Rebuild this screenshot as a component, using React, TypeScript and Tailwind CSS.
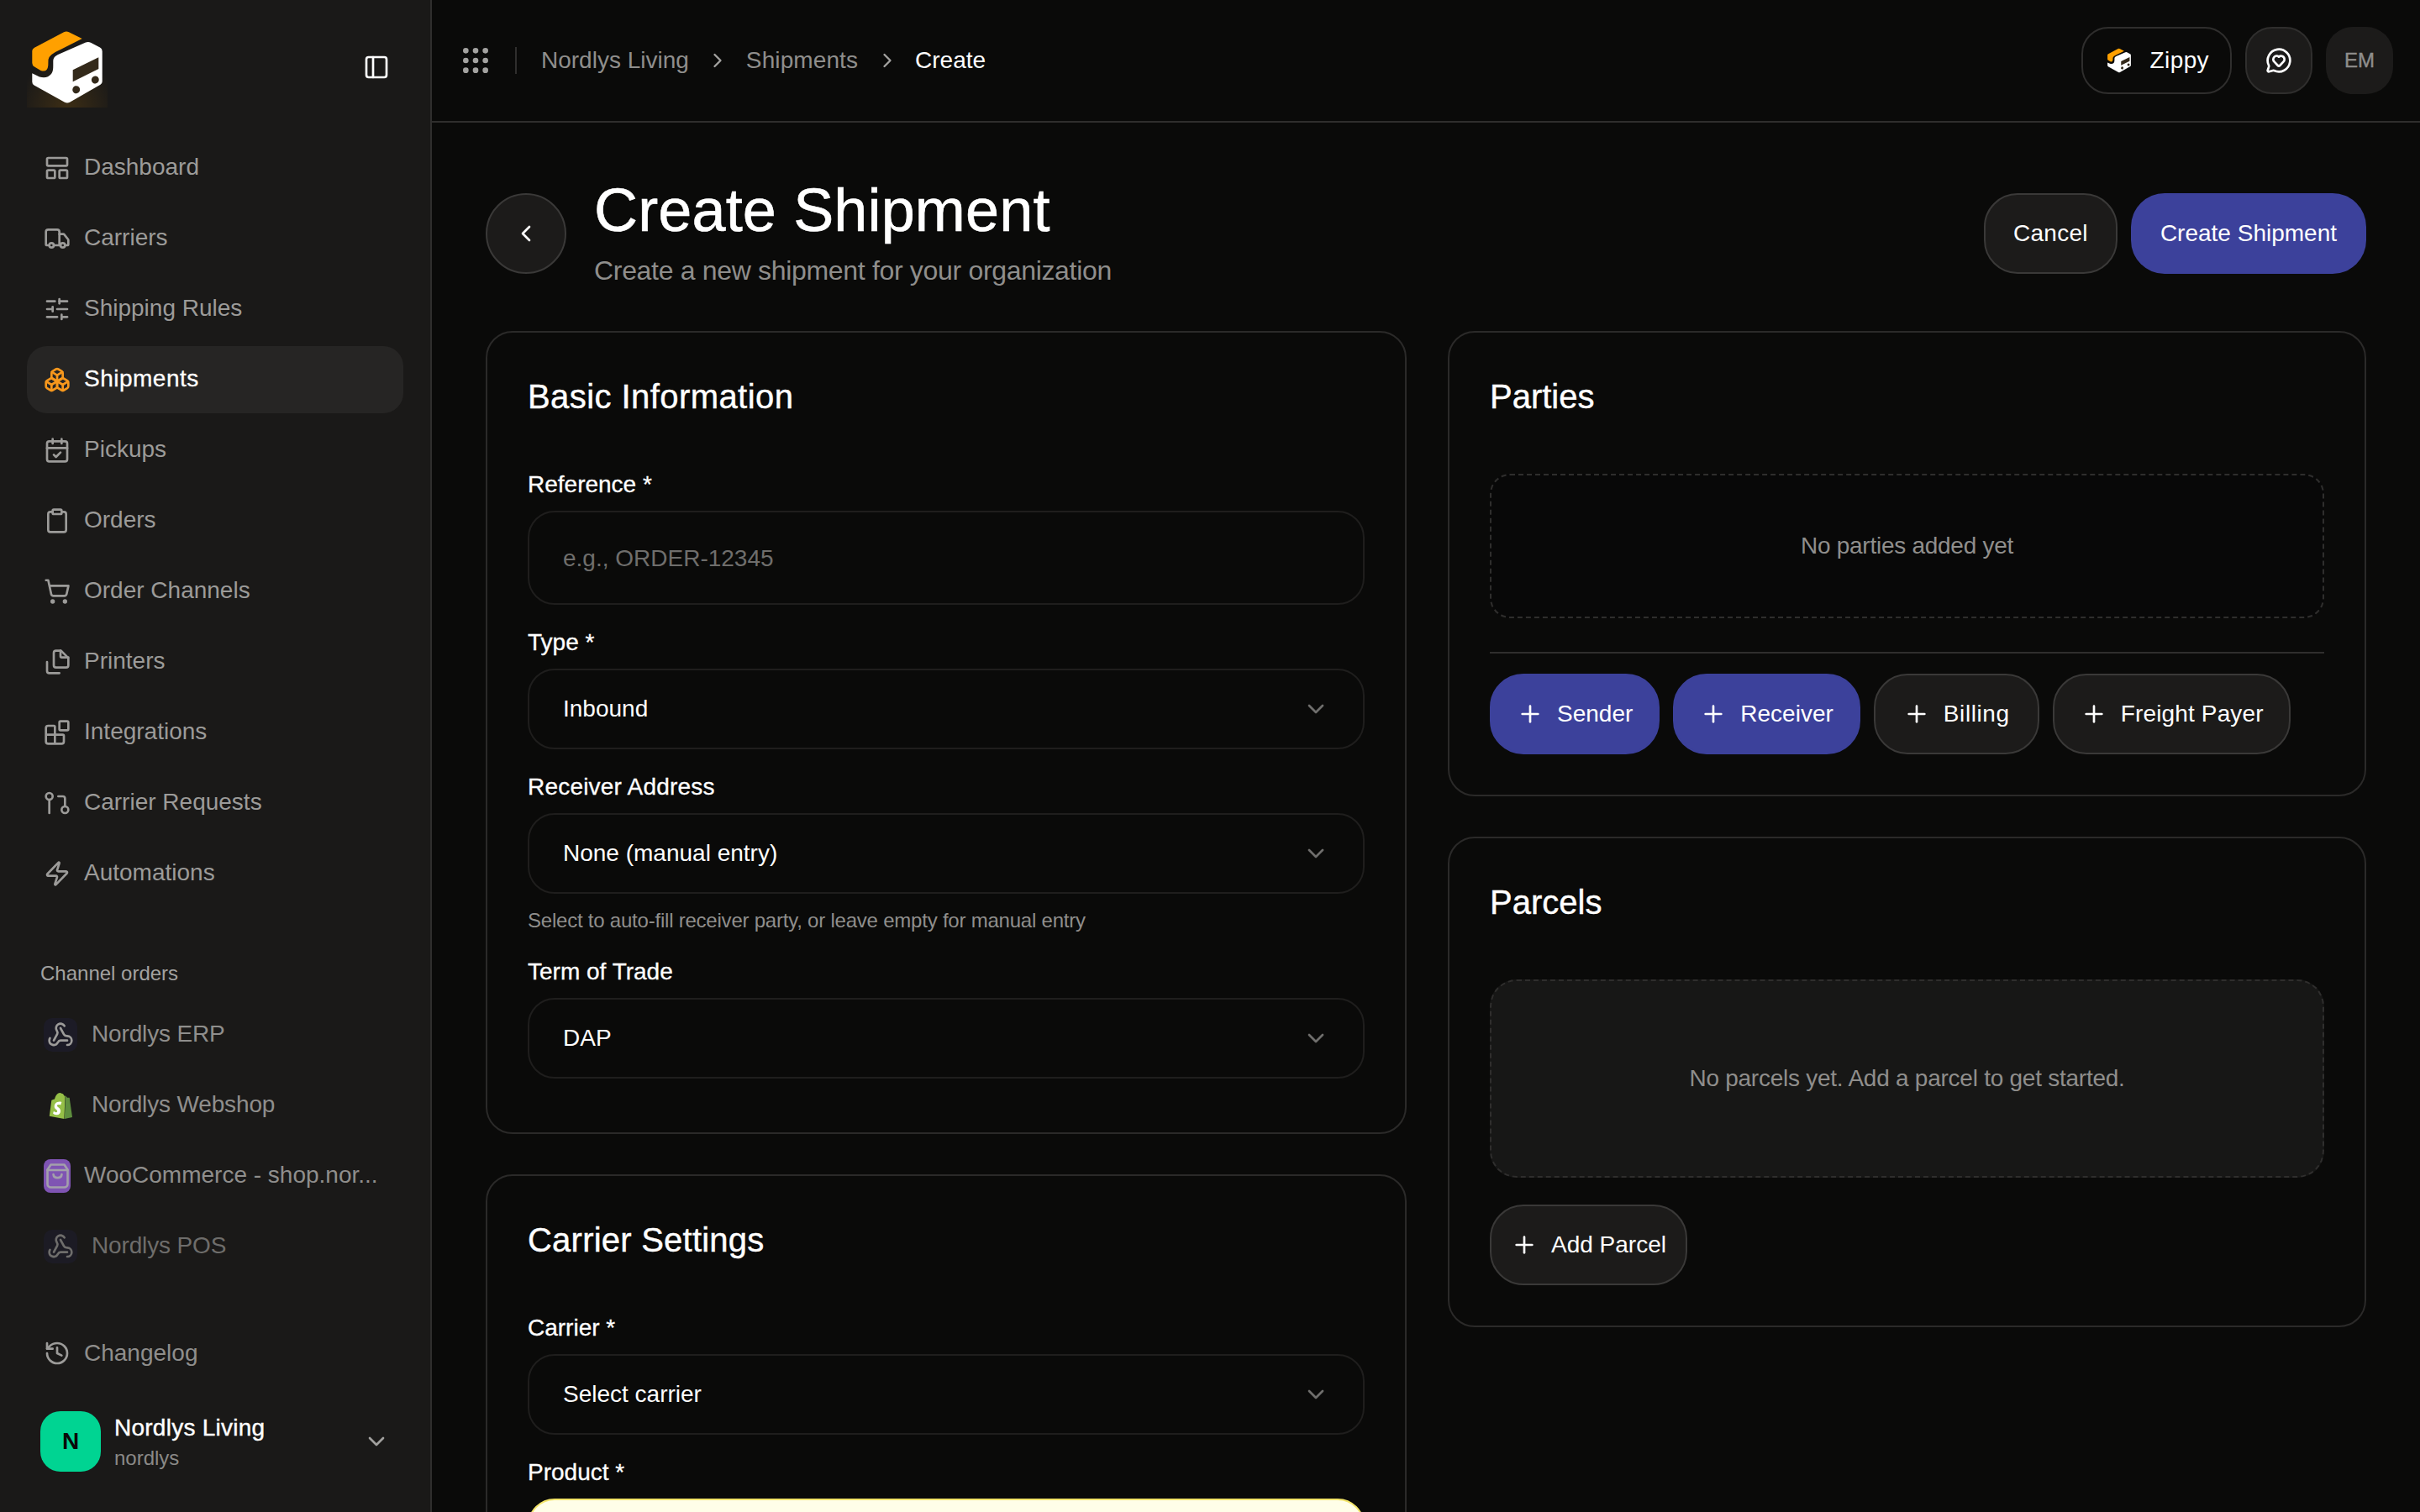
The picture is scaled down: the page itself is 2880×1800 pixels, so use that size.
import React from "react";
import {
  Blocks, Boxes, CalendarCheck, ChevronDown, ChevronLeft, ChevronRight, Clipboard, Grip, History,
  LayoutPanelTop, MessageCircleHeart, PanelLeft, Plus, ShoppingCart, SlidersHorizontal, Truck, Webhook, Zap,
} from "lucide-react";

function Logo({ size, glow }: { size: number; glow?: boolean }) {
  return (
    <svg width={size} height={size} viewBox="0 0 96 96" className="shrink-0">
      {glow && (
        <>
          <defs>
            <radialGradient id="logoGlow" cx="50%" cy="100%" r="62%">
              <stop offset="0%" stopColor="#ffa000" stopOpacity="0.15" />
              <stop offset="100%" stopColor="#ffa000" stopOpacity="0" />
            </radialGradient>
          </defs>
          <rect width="96" height="96" fill="url(#logoGlow)" />
        </>
      )}
      <path
        d="M9 24.8 L44 6.2 Q47 4.9 50 6.2 L65.7 14 L40 27 Q26 33 25.5 39 L25.3 46 Q24.5 54.5 16.5 52 L9 47.6 Q6.3 46 6.3 43 L6.3 28.5 Q6.3 26.2 9 24.8 Z"
        fill="#ffa000"
      />
      <path
        d="M6.3 55.3 L15 59.4 Q24 62 29 56 Q31.5 53 31.3 46 L31.3 40 Q31.5 35.5 37 33 L70 18.6 Q73 17.3 76 18.8 L87 24.6 Q89.7 26 89.7 29 L89.7 65 Q89.7 67.4 87.5 68.8 L51 89.8 Q48 91.4 45 89.8 L8.6 69.6 Q6.3 68.2 6.3 65.5 Z"
        fill="#ffffff"
      />
      <path d="M54.7 51.3 L85.3 36.3 L85.3 49.9 L54.7 65.3 Z" fill="#33291a" />
      <ellipse cx="58.7" cy="74.7" rx="4.4" ry="4.6" transform="rotate(30 58.7 74.7)" fill="#33291a" />
      <ellipse cx="81.3" cy="63" rx="4.4" ry="4.6" transform="rotate(30 81.3 63)" fill="#33291a" />
    </svg>
  );
}

function PullIcon({ className }: { className?: string }) {
  return (
    <svg viewBox="0 0 24 24" fill="none" stroke="currentColor" strokeWidth="2" strokeLinecap="round" strokeLinejoin="round" className={className}>
      <circle cx="5" cy="6" r="3" />
      <path d="M5 9v12" />
      <circle cx="19" cy="18" r="3" />
      <path d="M13 6h4a2 2 0 0 1 2 2v7" />
    </svg>
  );
}

function FilesIcon({ className }: { className?: string }) {
  return (
    <svg viewBox="0 0 24 24" fill="none" stroke="currentColor" strokeWidth="2" strokeLinecap="round" strokeLinejoin="round" className={className}>
      <path d="M15.5 2H11a2 2 0 0 0-2 2v11a2 2 0 0 0 2 2h9a2 2 0 0 0 2-2V8.5z" />
      <path d="M15 2v5a1 1 0 0 0 1 1h6" />
      <path d="M3 12v8a2 2 0 0 0 2 2h9" />
    </svg>
  );
}

function ShopifyIcon() {
  return (
    <svg width="31" height="31" viewBox="0 0 24 24" className="shrink-0">
      <path
        d="M15.009 24 1.448 21.453s1.755-13.601 1.83-14.063c.078-.638.097-.657.772-.87.097-.038.966-.309 2.16-.674C6.675 3.877 8.159 0 11.265 0c.404 0 .87.209 1.249.6h.115c1.332 0 2.085 1.137 2.508 2.37.425-.135.696-.21.714-.21.018 0 .058-.021.078-.021z"
        fill="#95bf47"
      />
      <path
        d="M15.337 23.979l7.216-1.561s-2.604-17.613-2.625-17.73c-.018-.116-.114-.192-.211-.192s-1.929-.136-1.929-.136-1.275-1.274-1.439-1.411c-.045-.037-.075-.057-.121-.074l-.914 21.104h.023z"
        fill="#5e8e3e"
      />
      <path
        d="M11.71 11.305s-.81-.424-1.774-.424c-1.447 0-1.504.906-1.504 1.141 0 1.232 3.24 1.715 3.24 4.629 0 2.295-1.44 3.76-3.406 3.76-2.354 0-3.54-1.465-3.54-1.465l.646-2.086s1.245 1.066 2.28 1.066c.675 0 .975-.545.975-.932 0-1.619-2.654-1.694-2.654-4.359-.034-2.237 1.571-4.416 4.827-4.416 1.257 0 1.875.361 1.875.361l-.945 2.715-.02.01z"
        fill="#ffffff"
      />
    </svg>
  );
}

function WooIcon() {
  return (
    <div className="w-[32px] h-[40px] rounded-[8px] bg-[#7f54b3] flex items-center justify-center shrink-0">
      <svg width="27" height="30" viewBox="0 0 27 30" fill="none" stroke="#a3a0ab" strokeWidth="2.6" strokeLinecap="round" strokeLinejoin="round">
        <path d="M5.5 1.5h16l4 6v17a4 4 0 0 1-4 4h-16a4 4 0 0 1-4-4v-17z" />
        <path d="M1.5 8h24" />
        <path d="M8.5 13c.6 5.5 9.4 5.5 10 0" />
      </svg>
    </div>
  );
}

const navItems = [
  { label: "Dashboard", Icon: LayoutPanelTop },
  { label: "Carriers", Icon: Truck },
  { label: "Shipping Rules", Icon: SlidersHorizontal },
  { label: "Shipments", Icon: Boxes, active: true },
  { label: "Pickups", Icon: CalendarCheck },
  { label: "Orders", Icon: Clipboard },
  { label: "Order Channels", Icon: ShoppingCart },
  { label: "Printers", Icon: FilesIcon },
  { label: "Integrations", Icon: Blocks },
  { label: "Carrier Requests", Icon: PullIcon },
  { label: "Automations", Icon: Zap },
];

function Sidebar() {
  return (
    <aside className="w-[514px] h-full shrink-0 bg-[#1a1918] border-r-2 border-[#2f2e2d] flex flex-col px-[32px]">
      <div className="h-[126px] pt-[32px] flex items-start justify-between pr-[16px]">
        <Logo size={96} glow />
        <PanelLeft className="w-[32px] h-[32px] mt-[32px] text-white" />
      </div>
      <nav className="flex flex-col gap-[4px] mt-[34px]">
        {navItems.map(({ label, Icon, active }) => (
          <div
            key={label}
            className={`h-[80px] rounded-[24px] flex items-center gap-[16px] pl-[20px] text-[28px] ${active ? "bg-[#262524] text-white" : "text-[#9c9b99]"}`}
          >
            <Icon className={`w-[32px] h-[32px] shrink-0 ${active ? "text-[#f7981d]" : "text-[#9c9b99]"}`} />
            <span className={`pb-[2px] ${active ? "tracking-[0.5px] [-webkit-text-stroke:0.3px_currentColor]" : ""}`}>{label}</span>
          </div>
        ))}
      </nav>
      <div className="mt-[63px] pl-[16px] text-[24px] leading-[32px] text-[#a3a2a0]">Channel orders</div>
      <div className="flex flex-col gap-[4px] mt-[17px]">
        <div className="h-[80px] flex items-center gap-[17px] pl-[20px] text-[28px] tracking-[-0.15px] text-[#8f8e8c]">
          <div className="w-[40px] h-[40px] rounded-[10px] bg-[#1c1b26] flex items-center justify-center shrink-0">
            <Webhook className="w-[32px] h-[32px] text-[#9c9b99]" />
          </div>
          <span className="pb-[2px]">Nordlys ERP</span>
        </div>
        <div className="h-[80px] flex items-center gap-[17px] pl-[20px] text-[28px] tracking-[-0.15px] text-[#8f8e8c]">
          <div className="w-[40px] h-[40px] flex items-center justify-center shrink-0">
            <ShopifyIcon />
          </div>
          <span className="pb-[2px]">Nordlys Webshop</span>
        </div>
        <div className="h-[80px] flex items-center gap-[16px] pl-[20px] text-[28px] text-[#8f8e8c]">
          <WooIcon />
          <span className="pb-[2px]">WooCommerce - shop.nor...</span>
        </div>
        <div className="h-[80px] flex items-center gap-[17px] pl-[20px] text-[28px] tracking-[-0.15px] text-[#6e6d6b]">
          <div className="w-[40px] h-[40px] rounded-[10px] bg-[#1c1b24] flex items-center justify-center shrink-0">
            <Webhook className="w-[32px] h-[32px] text-[#6e6d6b]" />
          </div>
          <span className="pb-[2px]">Nordlys POS</span>
        </div>
      </div>
      <div className="flex-1" />
      <div className="h-[80px] flex items-center gap-[16px] pl-[20px] text-[28px] text-[#8f8e8c]">
        <History className="w-[32px] h-[32px] text-[#9c9b99]" />
        <span>Changelog</span>
      </div>
      <div className="mt-[29px] mb-[48px] h-[72px] flex items-center pl-[16px] pr-[16px]">
        <div className="w-[72px] h-[72px] rounded-[24px] bg-[#00d492] flex items-center justify-center text-[28px] font-bold text-[#0a0a09] shrink-0">
          N
        </div>
        <div className="ml-[16px] flex-1 flex flex-col pt-[3px]">
          <span className="text-[28px] leading-[36px] tracking-[0.25px] text-white [-webkit-text-stroke:0.4px_currentColor]">Nordlys Living</span>
          <span className="text-[24px] leading-[36px] text-[#8a8987]">nordlys</span>
        </div>
        <ChevronDown className="w-[32px] h-[32px] text-[#a1a09e]" />
      </div>
    </aside>
  );
}

function Header() {
  return (
    <header className="h-[146px] shrink-0 border-b-2 border-[#2f2e2d] flex items-center pl-[32px] pr-[32px]">
      <Grip className="w-[40px] h-[40px] text-[#a3a2a0]" />
      <div className="w-[2px] h-[32px] bg-[#2f2e2d] ml-[27px] mr-[29px]" />
      <div className="flex items-center text-[28px] text-[#8f8e8c]">
        <span>Nordlys Living</span>
        <ChevronRight className="w-[28px] h-[28px] mx-[20px] text-[#a3a2a0]" />
        <span className="tracking-[0.1px]">Shipments</span>
        <ChevronRight className="w-[28px] h-[28px] ml-[21px] mr-[19px] text-[#a3a2a0]" />
        <span className="text-white">Create</span>
      </div>
      <div className="ml-auto flex items-center gap-[16px]">
        <div className="h-[80px] rounded-[32px] border-2 border-[#2f2e2d] flex items-center gap-[21px] pl-[27px] pr-[25px] text-[28px] text-white">
          <Logo size={32} />
          <span className="tracking-[0.4px]">Zippy</span>
        </div>
        <div className="w-[80px] h-[80px] rounded-[32px] border-2 border-[#2f2e2d] bg-[#1c1b1a] flex items-center justify-center">
          <MessageCircleHeart className="w-[32px] h-[32px] text-white" />
        </div>
        <div className="w-[80px] h-[80px] rounded-[32px] bg-[#1c1b1a] flex items-center justify-center text-[24px] text-[#8f8e8c] [-webkit-text-stroke:0.4px_currentColor]">
          EM
        </div>
      </div>
    </header>
  );
}

function Label({ children, required, wide }: { children: React.ReactNode; required?: boolean; wide?: boolean }) {
  return (
    <div className={`h-[40px] text-[28px] leading-[42px] text-white [-webkit-text-stroke:0.3px_currentColor] ${wide ? "tracking-[0.2px]" : ""}`}>
      {children}
      {required ? " *" : ""}
    </div>
  );
}

function SelectField({ value }: { value: string }) {
  return (
    <div className="mt-[12px] h-[96px] rounded-[32px] border-2 border-[#1f1e1d] flex items-center justify-between pl-[40px] pr-[40px] text-[28px] text-white">
      <span className="pb-[1px]">{value}</span>
      <ChevronDown className="w-[32px] h-[32px] text-[#6f6e6c]" />
    </div>
  );
}

function CardTitle({ children, tracking }: { children: React.ReactNode; tracking?: string }) {
  return <h2 className={`text-[40px] leading-[56px] text-white [-webkit-text-stroke:0.4px_currentColor] ${tracking ?? ""}`}>{children}</h2>;
}

function AddButton({ label, primary, pad, tracking }: { label: string; primary?: boolean; pad?: string; tracking?: string }) {
  return (
    <button
      className={`h-[96px] rounded-[40px] border-2 flex items-center gap-[16px] text-[28px] text-white ${pad ?? "px-[30px]"} ${primary ? "bg-[#3c419b] border-[#3c419b]" : "bg-[#1c1b1a] border-[#3a3938]"}`}
    >
      <Plus className="w-[32px] h-[32px]" />
      <span className={`pb-[1px] ${tracking ?? ""}`}>{label}</span>
    </button>
  );
}

function Content() {
  return (
    <div className="flex-1 min-h-0 overflow-hidden px-[64px] pt-[62px]">
      <div className="flex items-center h-[140px] mb-[46px]">
        <button className="w-[96px] h-[96px] rounded-full bg-[#1c1b1a] border-2 border-[#3a3938] flex items-center justify-center text-white shrink-0">
          <ChevronLeft className="w-[32px] h-[32px]" />
        </button>
        <div className="ml-[33px] flex flex-col">
          <h1 className="text-[72px] leading-[80px] tracking-[0.15px] text-white [-webkit-text-stroke:0.6px_currentColor]">Create Shipment</h1>
          <p className="text-[32px] leading-[48px] mt-[8px] tracking-[-0.32px] text-[#8f8e8c]">Create a new shipment for your organization</p>
        </div>
        <div className="ml-auto flex items-center gap-[16px]">
          <button className="h-[96px] rounded-[40px] border-2 border-[#3a3938] bg-[#1c1b1a] px-[33px] text-[28px] tracking-[0.3px] text-white">Cancel</button>
          <button className="h-[96px] rounded-[40px] bg-[#3c419b] px-[35px] text-[28px] text-white">Create Shipment</button>
        </div>
      </div>
      <div className="grid grid-cols-[1096px_1093px] gap-[49px] items-start">
        <div className="flex flex-col gap-[48px]">
          <section className="rounded-[32px] border-2 border-[#2b2a29] px-[48px] pt-[48px] pb-[64px]">
            <CardTitle tracking="tracking-[0.43px]">Basic Information</CardTitle>
            <div className="mt-[56px]">
              <Label required>Reference</Label>
              <input
                placeholder="e.g., ORDER-12345"
                className="mt-[12px] w-full h-[112px] rounded-[32px] border-2 border-[#1f1e1d] bg-transparent px-[40px] pt-[2px] text-[28px] text-white placeholder:text-[#6f6e6c] outline-none"
              />
            </div>
            <div className="mt-[24px]">
              <Label required>Type</Label>
              <SelectField value="Inbound" />
            </div>
            <div className="mt-[24px]">
              <Label wide>Receiver Address</Label>
              <SelectField value="None (manual entry)" />
              <p className="mt-[16px] text-[24px] leading-[32px] tracking-[-0.22px] text-[#8f8e8c]">Select to auto-fill receiver party, or leave empty for manual entry</p>
            </div>
            <div className="mt-[24px]">
              <Label>Term of Trade</Label>
              <SelectField value="DAP" />
            </div>
          </section>
          <section className="rounded-[32px] border-2 border-[#2b2a29] px-[48px] pt-[48px] pb-[64px]">
            <CardTitle tracking="tracking-[0.23px]">Carrier Settings</CardTitle>
            <div className="mt-[56px]">
              <Label required>Carrier</Label>
              <SelectField value="Select carrier" />
            </div>
            <div className="mt-[24px]">
              <Label required>Product</Label>
              <div className="mt-[12px] h-[96px] rounded-[32px] border-2 border-[#f3e56b] bg-[#fffee8]" />
            </div>
          </section>
        </div>
        <div className="flex flex-col gap-[48px]">
          <section className="rounded-[32px] border-2 border-[#2b2a29] px-[48px] pt-[48px] pb-[48px]">
            <CardTitle>Parties</CardTitle>
            <div className="mt-[64px] h-[172px] rounded-[24px] border-2 border-dashed border-[#2f2e2d] bg-[#080808] flex items-center justify-center text-[28px] tracking-[-0.27px] text-[#8f8e8c]">
              No parties added yet
            </div>
            <div className="mt-[40px] h-[2px] bg-[#2f2e2d]" />
            <div className="mt-[24px] flex gap-[16px]">
              <AddButton label="Sender" primary />
              <AddButton label="Receiver" primary />
              <AddButton label="Billing" pad="px-[33px]" tracking="tracking-[0.6px]" />
              <AddButton label="Freight Payer" pad="pl-[31px] pr-[30px]" tracking="tracking-[0.15px]" />
            </div>
          </section>
          <section className="rounded-[32px] border-2 border-[#2b2a29] px-[48px] pt-[48px] pb-[48px]">
            <CardTitle>Parcels</CardTitle>
            <div className="mt-[64px] h-[236px] rounded-[32px] border-2 border-dashed border-[#2f2e2d] bg-[#171716] flex items-center justify-center text-[28px] tracking-[-0.25px] text-[#8f8e8c]">
              No parcels yet. Add a parcel to get started.
            </div>
            <div className="mt-[32px] flex">
              <AddButton label="Add Parcel" pad="px-[23px]" />
            </div>
          </section>
        </div>
      </div>
    </div>
  );
}

export default function App() {
  return (
    <div className="w-[2880px] h-[1800px] overflow-hidden flex bg-[#0a0a09] font-['Liberation_Sans',Arial,sans-serif] antialiased">
      <Sidebar />
      <main className="flex-1 min-w-0 h-full flex flex-col">
        <Header />
        <Content />
      </main>
    </div>
  );
}
